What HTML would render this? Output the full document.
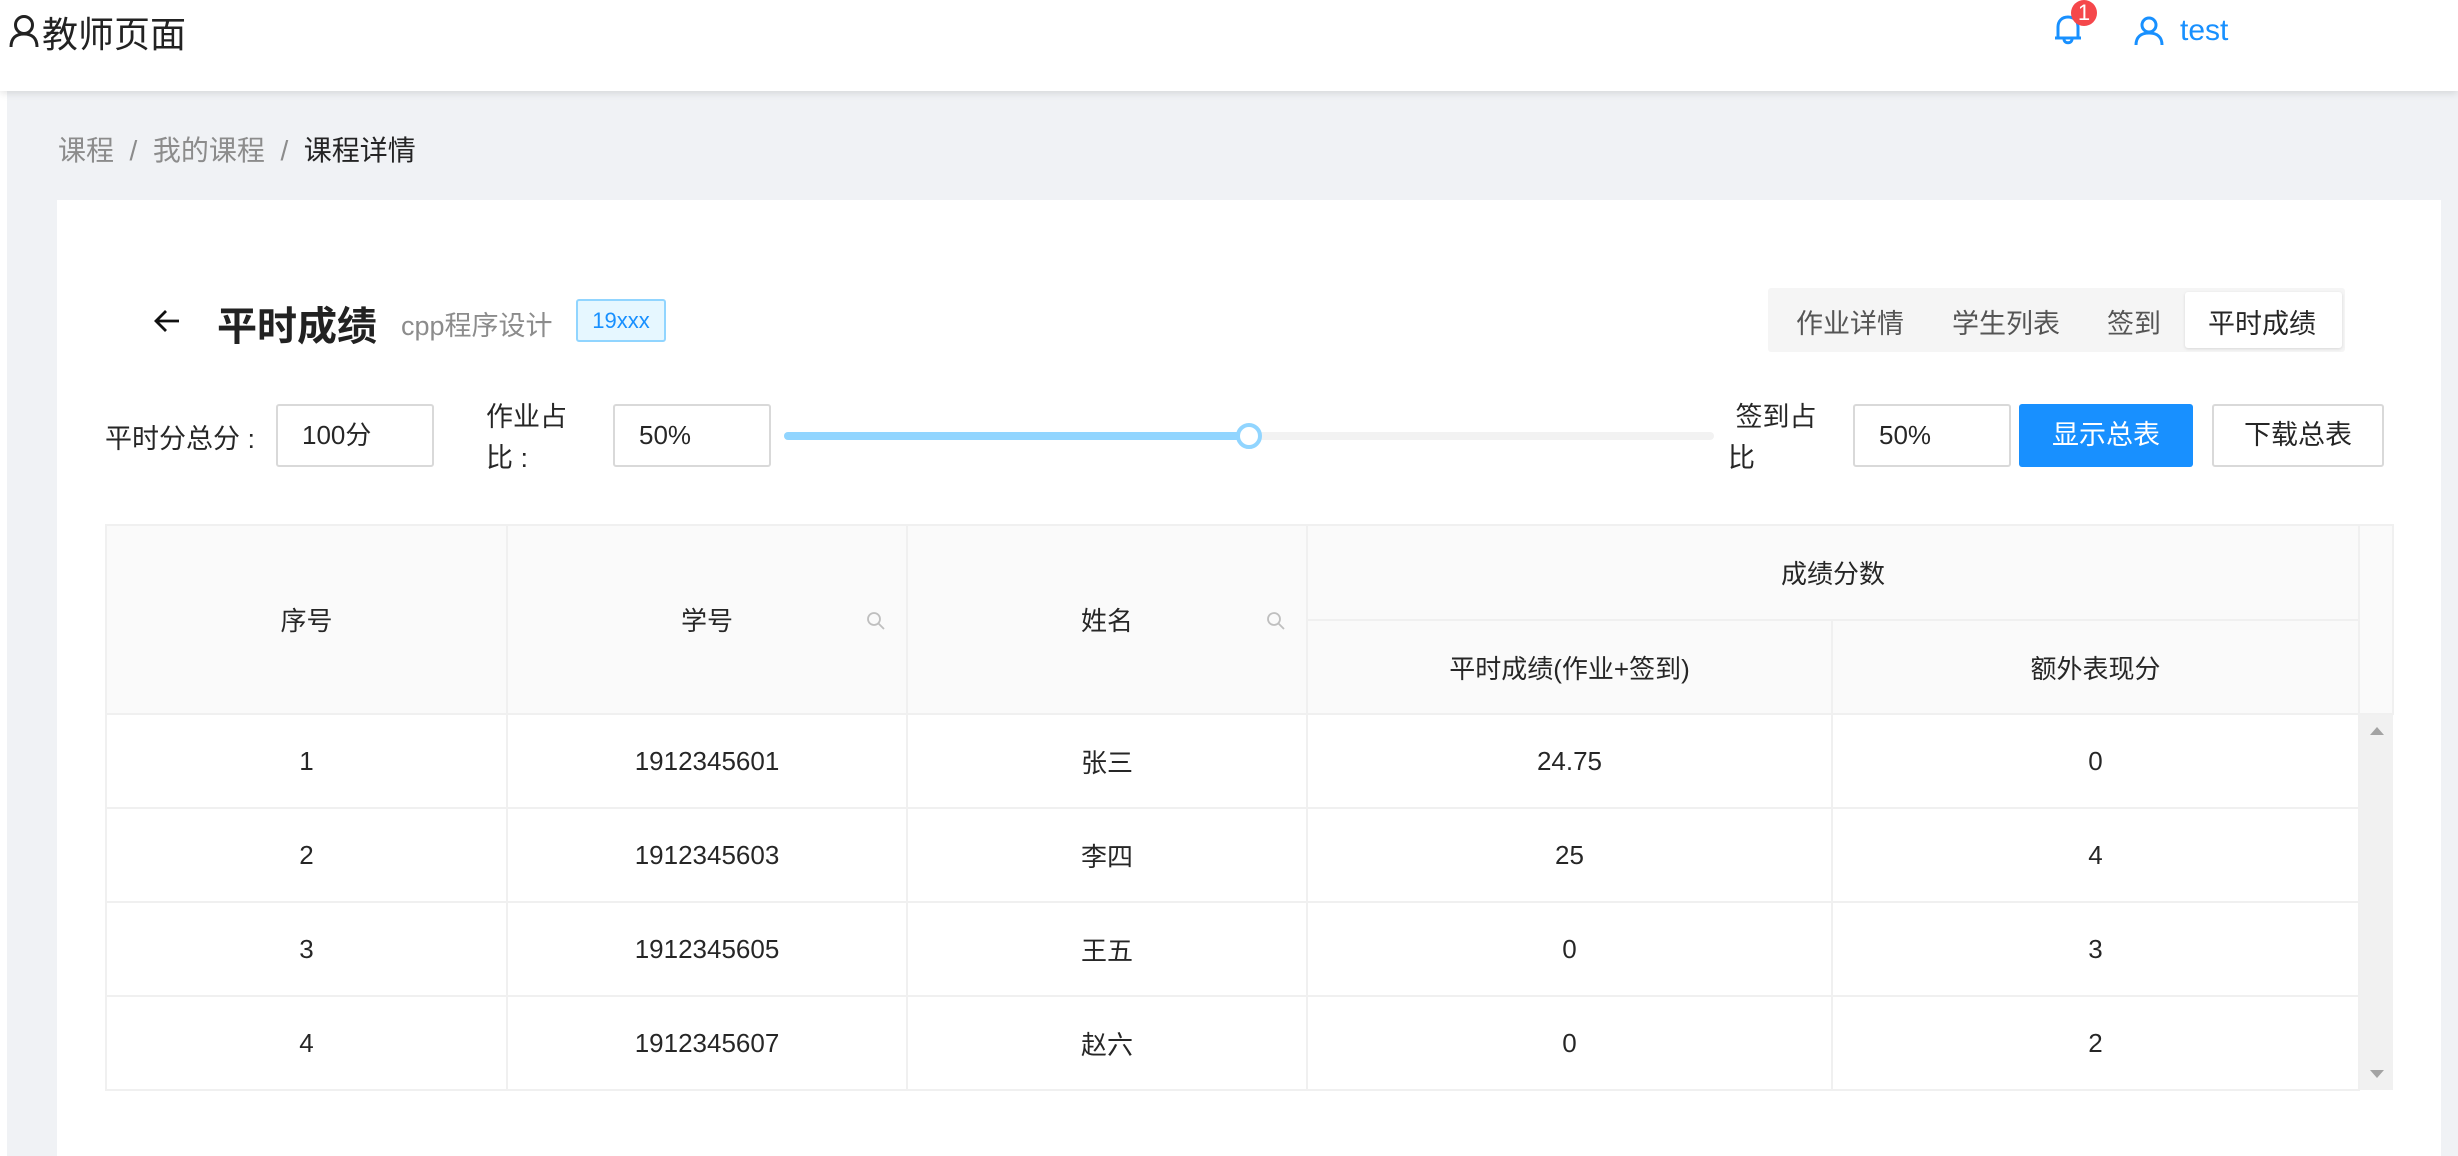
<!DOCTYPE html>
<html><head><meta charset="utf-8">
<style>
*{box-sizing:border-box;margin:0;padding:0}
body{width:2458px;height:1156px;overflow:hidden;background:#f0f2f5;font-family:"Liberation Sans","Noto Sans CJK SC",sans-serif;color:rgba(0,0,0,.85);position:relative}
.a{position:absolute}
.hdr{left:0;top:0;width:2458px;height:91px;background:#fff;box-shadow:0 2px 8px rgba(0,0,0,.12);z-index:2}
.inp{position:absolute;border:2px solid #d9d9d9;border-radius:3px;background:#fff;font-size:26px;padding-left:24px;line-height:59px;height:63px}
.btn{position:absolute;height:63px;border-radius:3px;font-size:27px;text-align:center;line-height:59px}
.lbl{font-size:27px;color:rgba(0,0,0,.85)}
table{border-collapse:collapse;position:absolute;left:105px;top:524px;table-layout:fixed}
td,th{border:2px solid #f0f0f0;text-align:center;font-size:26px;font-weight:normal;color:rgba(0,0,0,.85)}
th{background:#fafafa;position:relative}
td{height:94px;background:#fff}
.srch{position:absolute;top:50%;margin-top:-9px;width:20px;height:20px}
</style></head><body>
<div class="a hdr">
  <svg class="a" style="left:8px;top:14px" width="32" height="34" viewBox="0 0 32 34"><circle cx="16" cy="11" r="8.5" fill="none" stroke="#222" stroke-width="3"/><path d="M3 33 C3 24 8 20 16 20 C24 20 29 24 29 33" fill="none" stroke="#222" stroke-width="3"/></svg>
  <div class="a" style="left:42px;top:6px;font-size:36px;color:#222">教师页面</div>
  <svg class="a" style="left:2053px;top:12px" width="30" height="34" viewBox="0 0 30 34"><path d="M5 26 V15 C5 9 9 5 15 5 C21 5 25 9 25 15 V26 M2 26 H28 M11 27 C11 32 19 32 19 27" fill="none" stroke="#1890ff" stroke-width="3"/></svg>
  <div class="a" style="left:2071px;top:0px;width:26px;height:26px;border-radius:13px;background:#f5474b;color:#fff;font-size:22px;line-height:26px;text-align:center">1</div>
  <svg class="a" style="left:2134px;top:16px" width="30" height="30" viewBox="0 0 30 30"><circle cx="15" cy="9" r="7" fill="none" stroke="#1890ff" stroke-width="3"/><path d="M2 29 C2 21 7 17 15 17 C23 17 28 21 28 29" fill="none" stroke="#1890ff" stroke-width="3"/></svg>
  <div class="a" style="left:2180px;top:14px;font-size:30px;color:#1890ff">test</div>
</div>
<div class="a" style="left:0;top:91px;width:7px;height:1065px;background:#fff"></div>
<div class="a" style="left:58px;top:129px;font-size:28px;color:#8c8c8c">课程 &nbsp;/&nbsp; 我的课程 &nbsp;/&nbsp; <span style="color:rgba(0,0,0,.85)">课程详情</span></div>
<div class="a" style="left:57px;top:200px;width:2384px;height:956px;background:#fff"></div>

<svg class="a" style="left:152px;top:306px" width="30" height="30" viewBox="0 0 30 30"><path d="M27 15 H4 M14 5 L4 15 L14 25" fill="none" stroke="#111" stroke-width="2.8"/></svg>
<div class="a" style="left:217px;top:294px;font-size:40px;font-weight:bold;color:#222">平时成绩</div>
<div class="a" style="left:401px;top:304px;font-size:27px;color:#8c8c8c">cpp程序设计</div>
<div class="a" style="left:576px;top:299px;width:90px;height:43px;background:#e6f7ff;border:2px solid #91d5ff;border-radius:3px;color:#1890ff;font-size:22px;text-align:center;line-height:39px">19xxx</div>

<div class="a" style="left:1768px;top:288px;width:577px;height:64px;background:#f5f5f5;border-radius:3px"></div>
<div class="a" style="left:2185px;top:292px;width:157px;height:56px;background:#fff;border-radius:3px;box-shadow:0 1px 3px rgba(0,0,0,.12)"></div>
<div class="a lbl" style="left:1796px;top:302px;color:#555">作业详情</div>
<div class="a lbl" style="left:1952px;top:302px;color:#555">学生列表</div>
<div class="a lbl" style="left:2107px;top:302px;color:#555">签到</div>
<div class="a lbl" style="left:2208px;top:302px">平时成绩</div>

<div class="a lbl" style="left:105px;top:417px">平时分总分 :</div>
<div class="inp" style="left:276px;top:404px;width:158px">100分</div>
<div class="a lbl" style="left:486px;top:397px;line-height:41px">作业占<br>比 :</div>
<div class="inp" style="left:613px;top:404px;width:158px">50%</div>
<div class="a" style="left:784px;top:432px;width:930px;height:8px;border-radius:4px;background:#f2f2f2"></div>
<div class="a" style="left:784px;top:432px;width:465px;height:8px;border-radius:4px;background:#91d5ff"></div>
<div class="a" style="left:1236px;top:423px;width:26px;height:26px;border-radius:13px;background:#fff;border:4px solid #91d5ff"></div>
<div class="a lbl" style="left:1728px;top:397px;line-height:41px">&nbsp;签到占<br>比</div>
<div class="inp" style="left:1853px;top:404px;width:158px">50%</div>
<div class="btn" style="left:2019px;top:404px;width:174px;background:#1890ff;color:#fff;line-height:63px">显示总表</div>
<div class="btn" style="left:2212px;top:404px;width:172px;border:2px solid #d9d9d9;background:#fff">下载总表</div>

<table>
<colgroup><col style="width:401px"><col style="width:400px"><col style="width:400px"><col style="width:525px"><col style="width:527px"><col style="width:34px"></colgroup>
<tr style="height:95px"><th rowspan="2">序号</th><th rowspan="2">学号<svg class="srch" style="right:20px" viewBox="0 0 20 20"><circle cx="8" cy="8" r="6" fill="none" stroke="#bfbfbf" stroke-width="1.8"/><path d="M12.5 12.5 L18 18" stroke="#bfbfbf" stroke-width="1.8"/></svg></th><th rowspan="2">姓名<svg class="srch" style="right:20px" viewBox="0 0 20 20"><circle cx="8" cy="8" r="6" fill="none" stroke="#bfbfbf" stroke-width="1.8"/><path d="M12.5 12.5 L18 18" stroke="#bfbfbf" stroke-width="1.8"/></svg></th><th colspan="2">成绩分数</th><th rowspan="2"></th></tr>
<tr style="height:94px"><th>平时成绩(作业+签到)</th><th>额外表现分</th></tr>
<tr><td>1</td><td>1912345601</td><td>张三</td><td>24.75</td><td>0</td><td rowspan="4" style="background:#f1f1f1;border:none;position:relative"><div class="a" style="left:10px;top:12px;width:0;height:0;border-left:7px solid transparent;border-right:7px solid transparent;border-bottom:8px solid #a3a3a3"></div><div class="a" style="left:10px;bottom:12px;width:0;height:0;border-left:7px solid transparent;border-right:7px solid transparent;border-top:8px solid #a3a3a3"></div></td></tr>
<tr><td>2</td><td>1912345603</td><td>李四</td><td>25</td><td>4</td></tr>
<tr><td>3</td><td>1912345605</td><td>王五</td><td>0</td><td>3</td></tr>
<tr><td>4</td><td>1912345607</td><td>赵六</td><td>0</td><td>2</td></tr>
</table>
</body></html>
